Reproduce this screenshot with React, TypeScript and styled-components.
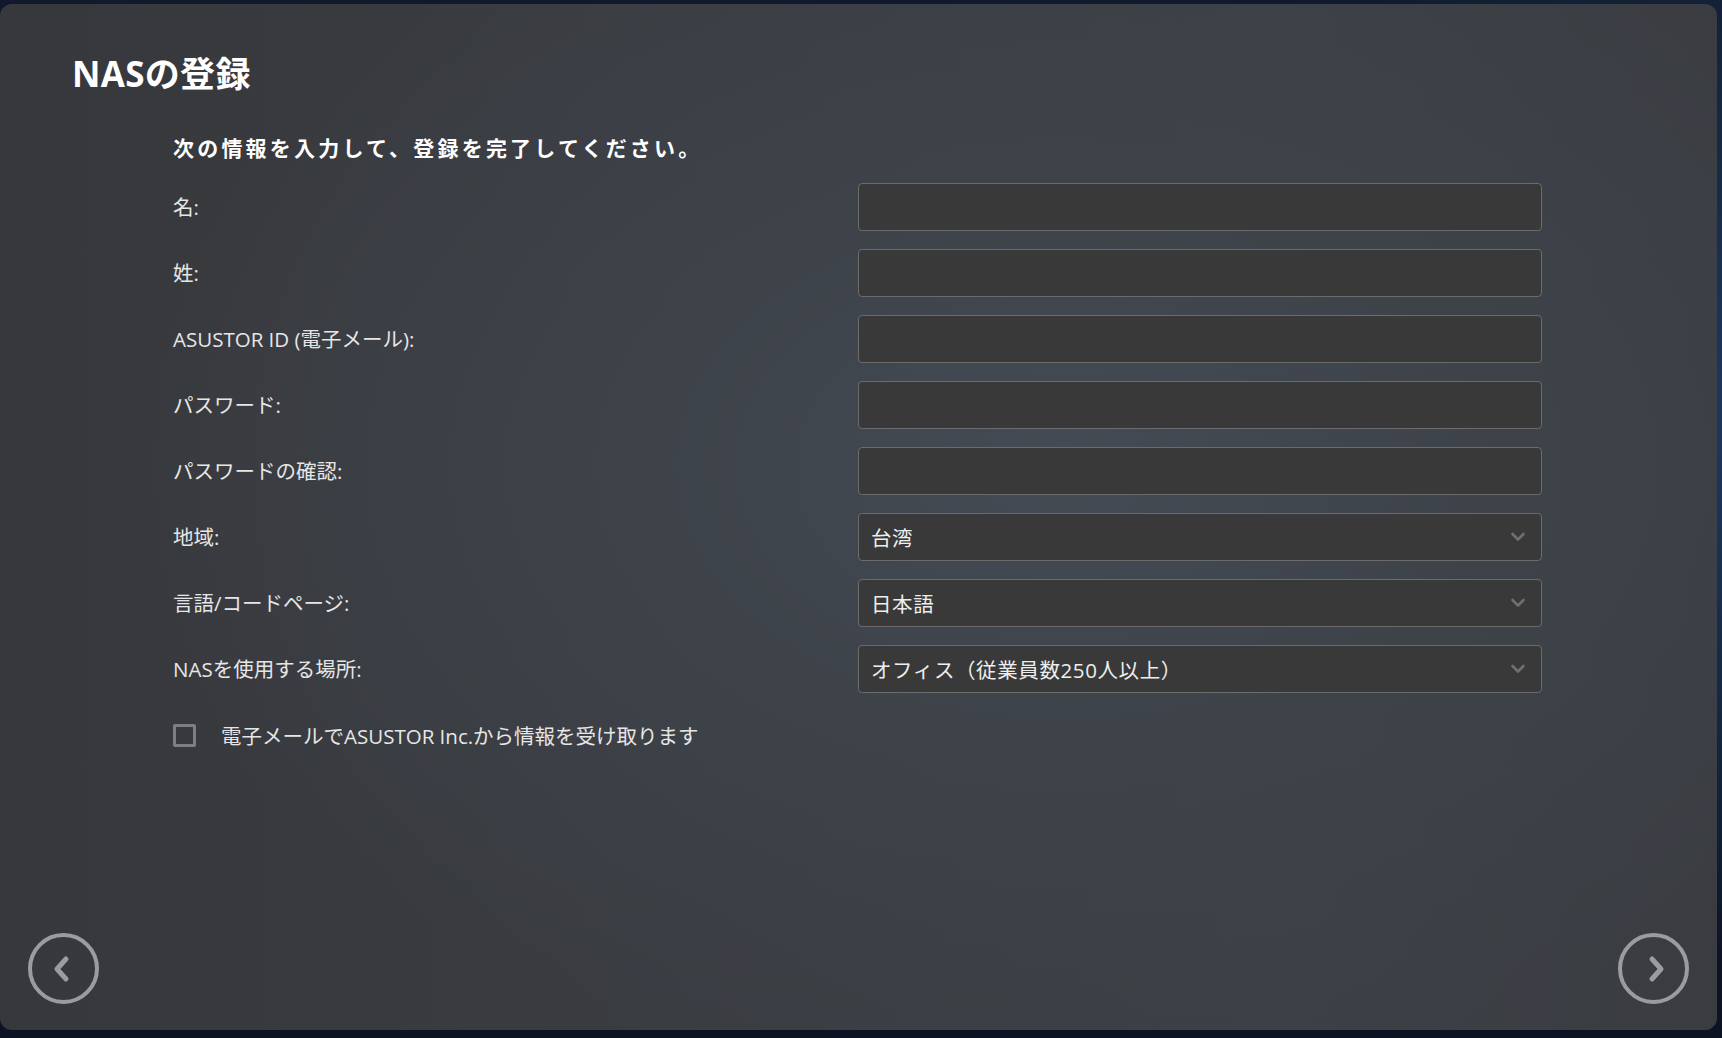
import styled, { createGlobalStyle } from 'styled-components';

const GlobalStyle = createGlobalStyle`
  html, body {
    margin: 0;
    padding: 0;
    background: #0e1728;
  }
  * { box-sizing: border-box; }
`;

const FONT = `"Open Sans", "Noto Sans CJK JP", sans-serif`;

const Screen = styled.div`
  width: 1722px;
  height: 1038px;
  padding: 4px 5px 8px 0;
  background:
    radial-gradient(circle at 99% 40%, rgba(40, 80, 130, 0.55), transparent 30%),
    linear-gradient(180deg, #101a2c 0%, #0f1a2e 60%, #0c1322 100%);
  overflow: hidden;
`;

const Panel = styled.div`
  height: 100%;
  border-radius: 12px;
  background:
    radial-gradient(ellipse 55% 60% at 62% 45%, #444b54 0%, #3e434a 45%, transparent 100%),
    linear-gradient(90deg, #37383c 0%, #3a3d42 45%, #3c4046 75%, #3a3c41 100%);
  display: flex;
  flex-direction: column;
  font-family: ${FONT};
  color: #ececec;
`;

const Title = styled.h1`
  margin: 0;
  padding: 46px 0 0 72px;
  font-size: 35px;
  font-weight: 700;
  line-height: 48px;
  color: #ffffff;
  letter-spacing: 0.3px;
`;

const Form = styled.div`
  padding: 0 0 0 173px;
  display: flex;
  flex-direction: column;
`;

const Intro = styled.p`
  margin: 35px 0 20px;
  font-size: 21px;
  font-weight: 700;
  line-height: 30px;
  letter-spacing: 3.2px;
  color: #ffffff;
`;

const Grid = styled.div`
  display: grid;
  grid-template-columns: 685px 684px;
  row-gap: 18px;
  align-items: center;
`;

const Label = styled.label`
  font-size: 20.5px;
  line-height: 28px;
  color: #e6e6e6;
`;

const TextInput = styled.input`
  height: 48px;
  width: 100%;
  background: #393939;
  border: 1px solid #6b6b6b;
  border-radius: 4px;
  outline: none;
  padding: 0 13px;
  font-family: ${FONT};
  font-size: 20.5px;
  color: #eeeeee;
`;

const SelectBox = styled.div`
  height: 48px;
  background: #393939;
  border: 1px solid #6b6b6b;
  border-radius: 4px;
  padding: 0 15px 0 12px;
  display: flex;
  align-items: center;
  justify-content: space-between;
  font-size: 20.5px;
  letter-spacing: 0.6px;
  color: #eeeeee;
`;

const CheckRow = styled.div`
  display: flex;
  align-items: center;
  gap: 25px;
  margin-top: 18px;
  height: 48px;
  font-size: 20.5px;
  color: #e6e6e6;
`;

const Checkbox = styled.span`
  width: 23px;
  height: 23px;
  border: 3px solid #7e7f82;
  border-radius: 2px;
`;

const Footer = styled.div`
  margin-top: auto;
  padding: 0 28px 26px;
  display: flex;
  justify-content: space-between;
`;

const NavButton = styled.button`
  width: 71px;
  height: 71px;
  padding: 0;
  border: 4px solid #9a9ca1;
  border-radius: 50%;
  background: transparent;
  display: flex;
  align-items: center;
  justify-content: center;
  cursor: pointer;
`;

const Chevron = () => (
  <svg width="16" height="10" viewBox="0 0 16 10">
    <path d="M2.5 2 L8 7.5 L13.5 2" fill="none" stroke="#6f6f6f" strokeWidth="2.6" strokeLinecap="round" strokeLinejoin="round" />
  </svg>
);

const Arrow = ({ dir }: { dir: 'left' | 'right' }) => (
  <svg width="24" height="34" viewBox="0 0 24 34" style={{ marginLeft: dir === 'left' ? -4 : 4 }}>
    <path
      d={dir === 'left' ? 'M16 7 L7 17 L16 27' : 'M8 7 L17 17 L8 27'}
      fill="none"
      stroke="#9a9ca1"
      strokeWidth="5"
      strokeLinecap="round"
      strokeLinejoin="round"
    />
  </svg>
);

const textFields = ['名:', '姓:', 'ASUSTOR ID (電子メール):', 'パスワード:', 'パスワードの確認:'];
const selects = [
  { label: '地域:', value: '台湾' },
  { label: '言語/コードページ:', value: '日本語' },
  { label: 'NASを使用する場所:', value: 'オフィス（従業員数250人以上）' },
];

export default function App() {
  return (
    <>
      <GlobalStyle />
      <Screen>
        <Panel>
          <Title>NASの登録</Title>
          <Form>
            <Intro>次の情報を入力して、登録を完了してください。</Intro>
            <Grid>
              {textFields.map((f) => (
                <>
                  <Label key={f}>{f}</Label>
                  <TextInput type={f.startsWith('パスワード') ? 'password' : 'text'} />
                </>
              ))}
              {selects.map((s) => (
                <>
                  <Label key={s.label}>{s.label}</Label>
                  <SelectBox>
                    <span>{s.value}</span>
                    <Chevron />
                  </SelectBox>
                </>
              ))}
            </Grid>
            <CheckRow>
              <Checkbox />
              <span>電子メールでASUSTOR Inc.から情報を受け取ります</span>
            </CheckRow>
          </Form>
          <Footer>
            <NavButton aria-label="戻る">
              <Arrow dir="left" />
            </NavButton>
            <NavButton aria-label="次へ">
              <Arrow dir="right" />
            </NavButton>
          </Footer>
        </Panel>
      </Screen>
    </>
  );
}
